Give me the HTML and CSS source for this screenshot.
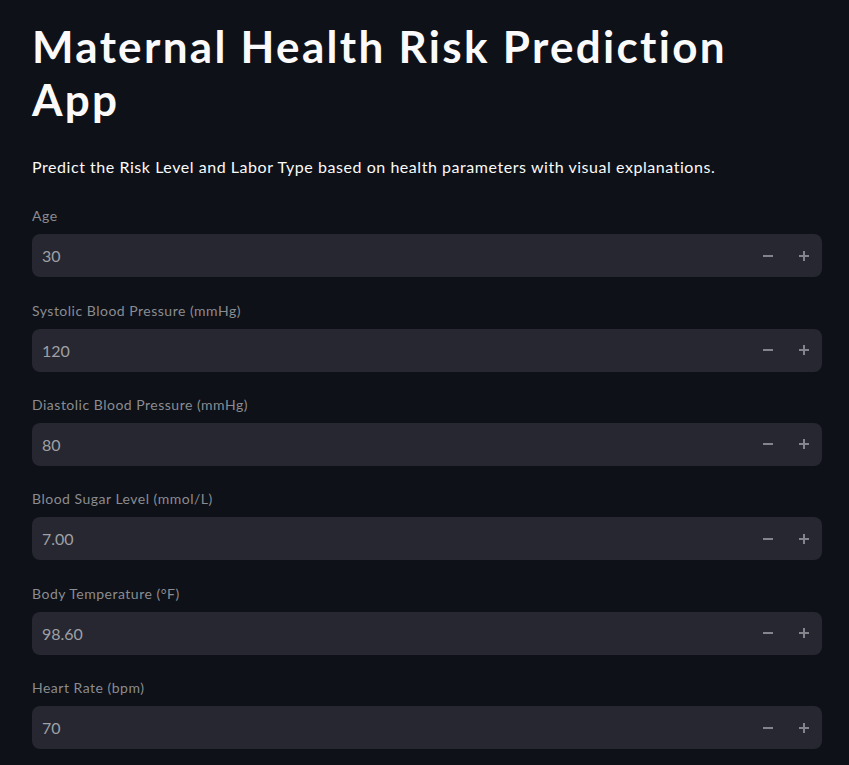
FILE: index.html
```html
<!DOCTYPE html>
<html lang="en">
<head>
<meta charset="utf-8">
<title>Maternal Health Risk Prediction App</title>
<link rel="stylesheet" href="styles.css">
</head>
<body>
<main class="main">
  <h1 class="title">Maternal Health Risk Prediction App</h1>
  <p class="intro">Predict the Risk Level and Labor Type based on health parameters with visual explanations.</p>
  <div class="fields">
    <div class="field">
      <label class="label">Age</label>
      <div class="input">
        <span class="value">30</span>
        <div class="steps">
          <button class="step"><svg width="10" height="10" viewBox="0 0 10 10"><rect x="0" y="4" width="10" height="2"/></svg></button>
          <button class="step"><svg width="10" height="10" viewBox="0 0 10 10"><rect x="0" y="4" width="10" height="2"/><rect x="4" y="0" width="2" height="10"/></svg></button>
        </div>
      </div>
    </div>
    <div class="field">
      <label class="label">Systolic Blood Pressure (mmHg)</label>
      <div class="input">
        <span class="value">120</span>
        <div class="steps">
          <button class="step"><svg width="10" height="10" viewBox="0 0 10 10"><rect x="0" y="4" width="10" height="2"/></svg></button>
          <button class="step"><svg width="10" height="10" viewBox="0 0 10 10"><rect x="0" y="4" width="10" height="2"/><rect x="4" y="0" width="2" height="10"/></svg></button>
        </div>
      </div>
    </div>
    <div class="field">
      <label class="label">Diastolic Blood Pressure (mmHg)</label>
      <div class="input">
        <span class="value">80</span>
        <div class="steps">
          <button class="step"><svg width="10" height="10" viewBox="0 0 10 10"><rect x="0" y="4" width="10" height="2"/></svg></button>
          <button class="step"><svg width="10" height="10" viewBox="0 0 10 10"><rect x="0" y="4" width="10" height="2"/><rect x="4" y="0" width="2" height="10"/></svg></button>
        </div>
      </div>
    </div>
    <div class="field">
      <label class="label">Blood Sugar Level (mmol/L)</label>
      <div class="input">
        <span class="value">7.00</span>
        <div class="steps">
          <button class="step"><svg width="10" height="10" viewBox="0 0 10 10"><rect x="0" y="4" width="10" height="2"/></svg></button>
          <button class="step"><svg width="10" height="10" viewBox="0 0 10 10"><rect x="0" y="4" width="10" height="2"/><rect x="4" y="0" width="2" height="10"/></svg></button>
        </div>
      </div>
    </div>
    <div class="field">
      <label class="label">Body Temperature (°F)</label>
      <div class="input">
        <span class="value">98.60</span>
        <div class="steps">
          <button class="step"><svg width="10" height="10" viewBox="0 0 10 10"><rect x="0" y="4" width="10" height="2"/></svg></button>
          <button class="step"><svg width="10" height="10" viewBox="0 0 10 10"><rect x="0" y="4" width="10" height="2"/><rect x="4" y="0" width="2" height="10"/></svg></button>
        </div>
      </div>
    </div>
    <div class="field">
      <label class="label">Heart Rate (bpm)</label>
      <div class="input">
        <span class="value">70</span>
        <div class="steps">
          <button class="step"><svg width="10" height="10" viewBox="0 0 10 10"><rect x="0" y="4" width="10" height="2"/></svg></button>
          <button class="step"><svg width="10" height="10" viewBox="0 0 10 10"><rect x="0" y="4" width="10" height="2"/><rect x="4" y="0" width="2" height="10"/></svg></button>
        </div>
      </div>
    </div>
  </div>
</main>
</body>
</html>
```
FILE: styles.css
```css
html, body {
  margin: 0;
  padding: 0;
  background: #0e1117;
  height: 100%;
  overflow: hidden;
}
body {
  font-family: Lato, "Noto Sans", sans-serif;
  color: #fafafa;
}
.main {
  padding: 20px 27px 0 32px;
}
.title {
  margin: 0;
  font-size: 44px;
  line-height: 52.8px;
  font-weight: 700;
  letter-spacing: 2.3px;
  color: #fafafa;
}
.intro {
  margin: 28px 0 0;
  font-size: 16px;
  line-height: 25.6px;
  letter-spacing: 0.55px;
}
.fields {
  margin-top: 26px;
  display: flex;
  flex-direction: column;
  gap: 22.4px;
}
.field {
  display: flex;
  flex-direction: column;
}
.label {
  font-size: 14px;
  line-height: 21px;
  letter-spacing: 0.5px;
  color: #8a8c92;
  margin-bottom: 8px;
}
.input {
  height: 43px;
  background: #262730;
  border-radius: 8px;
  display: flex;
  align-items: center;
  padding-left: 10px;
}
.value {
  flex: 1;
  font-size: 16px;
  color: #9fa0a5;
}
.steps {
  display: flex;
  gap: 4px;
  padding-right: 2px;
}
.step {
  width: 32px;
  height: 43px;
  border: 0;
  padding: 0;
  background: transparent;
  display: flex;
  align-items: center;
  justify-content: center;
  fill: #84858c;
}
```
